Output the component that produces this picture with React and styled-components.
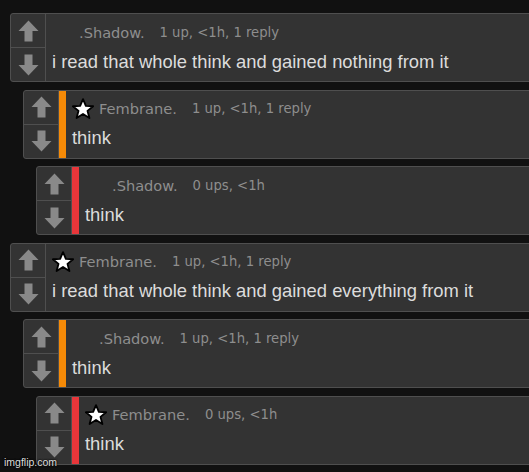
import React from "react";
import styled, { createGlobalStyle } from "styled-components";

const GlobalStyle = createGlobalStyle`
  html, body {
    margin: 0;
    padding: 0;
    background: #111111;
    overflow: hidden;
  }
`;

const comments = [
  { depth: 0, star: false, name: ".Shadow.", meta: "1 up, <1h, 1 reply", text: "i read that whole think and gained nothing from it" },
  { depth: 1, star: true, name: "Fembrane.", meta: "1 up, <1h, 1 reply", text: "think", bar: "#f58a07" },
  { depth: 2, star: false, name: ".Shadow.", meta: "0 ups, <1h", text: "think", bar: "#e8363a" },
  { depth: 0, star: true, name: "Fembrane.", meta: "1 up, <1h, 1 reply", text: "i read that whole think and gained everything from it" },
  { depth: 1, star: false, name: ".Shadow.", meta: "1 up, <1h, 1 reply", text: "think", bar: "#f58a07" },
  { depth: 2, star: true, name: "Fembrane.", meta: "0 ups, <1h", text: "think", bar: "#e8363a" },
];

const Page = styled.div`
  position: relative;
  width: 529px;
  height: 472px;
  padding: 13px 0 0 10px;
  box-sizing: border-box;
  display: flex;
  flex-direction: column;
  gap: 7.6px;
  font-family: "DejaVu Sans", sans-serif;
`;

const Card = styled.div`
  display: flex;
  flex-shrink: 0;
  height: 69px;
  box-sizing: border-box;
  margin-left: ${(p) => p.$depth * 13}px;
  margin-right: -40px;
  background: #333333;
  border: 1px solid #4f4f4f;
  border-radius: 3px;
`;

const Votes = styled.div`
  width: 34px;
  display: flex;
  flex-direction: column;
  border-right: 1px solid #4f4f4f;
`;

const VoteCell = styled.div`
  flex: 1;
  display: flex;
  align-items: center;
  justify-content: center;
  & + & {
    border-top: 1px solid #4f4f4f;
  }
`;

const Bar = styled.div`
  width: 7px;
  background: ${(p) => p.$color};
`;

const Body = styled.div`
  display: flex;
  flex-direction: column;
  padding: 4px 0 0 6px;
`;

const Header = styled.div`
  display: flex;
  align-items: center;
  height: 28px;
  color: #8e8e8e;
`;

const StarSlot = styled.div`
  width: 22px;
  height: 22px;
  margin-right: 5px;
  display: flex;
  align-items: center;
  justify-content: center;
`;

const Name = styled.span`
  font-size: 14.6px;
  margin-right: 15px;
`;

const Meta = styled.span`
  font-size: 13.2px;
`;

const Text = styled.div`
  font-family: "Liberation Sans", Arial, sans-serif;
  font-size: 18.4px;
  color: #dcdcdc;
  margin-top: 4.5px;
  white-space: nowrap;
`;

const Watermark = styled.div`
  position: absolute;
  left: 4px;
  bottom: 4px;
  font-family: "Liberation Sans", Arial, sans-serif;
  font-size: 10.5px;
  color: #dedede;
  text-shadow: 0 0 2px #000, 0 0 2px #000;
`;

const Arrow = ({ down }) => (
  <svg width="21" height="22" viewBox="0 0 21 22" style={down ? { transform: "rotate(180deg)" } : undefined}>
    <path d="M10.5 0.5 L20.5 11 L14.5 11 L14.5 21.5 L6.5 21.5 L6.5 11 L0.5 11 Z" fill="#898989" />
  </svg>
);

const Star = () => (
  <svg width="22" height="22" viewBox="0 0 20 20">
    <path
      d="M10 1 L12.6 7.1 L19.2 7.5 L14.1 11.7 L15.8 18.2 L10 14.6 L4.2 18.2 L5.9 11.7 L0.8 7.5 L7.4 7.1 Z"
      fill="#ffffff"
      stroke="#000000"
      strokeWidth="1.7"
      strokeLinejoin="round"
    />
  </svg>
);

const Comment = ({ c }) => (
  <Card $depth={c.depth}>
    <Votes>
      <VoteCell><Arrow /></VoteCell>
      <VoteCell><Arrow down /></VoteCell>
    </Votes>
    {c.bar && <Bar $color={c.bar} />}
    <Body>
      <Header>
        <StarSlot>{c.star && <Star />}</StarSlot>
        <Name>{c.name}</Name>
        <Meta>{c.meta}</Meta>
      </Header>
      <Text>{c.text}</Text>
    </Body>
  </Card>
);

export default function App() {
  return (
    <>
      <GlobalStyle />
      <Page>
        {comments.map((c, i) => (
          <Comment key={i} c={c} />
        ))}
        <Watermark>imgflip.com</Watermark>
      </Page>
    </>
  );
}
